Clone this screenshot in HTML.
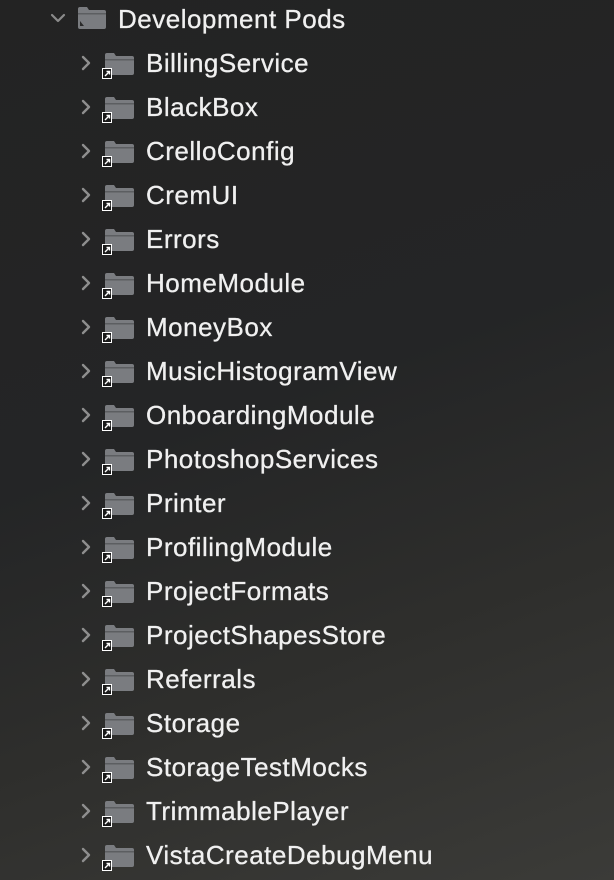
<!DOCTYPE html>
<html><head><style>
html,body{margin:0;padding:0}
body{width:614px;height:880px;overflow:hidden;position:relative;font-family:"Liberation Sans",sans-serif;
background:linear-gradient(160deg,#232323 0%,#242526 45%,#2e2e2c 70%,#3b3b38 100%);}
.r{position:absolute;height:44px;left:0;width:614px}
.t{position:absolute;top:0;line-height:44px;font-size:26px;color:#f0f0f0;letter-spacing:0.5px;-webkit-text-stroke:0.3px #f0f0f0}
svg{position:absolute}
</style></head><body>
<div class="r" style="top:-3px">
<svg style="left:50px;top:15px" width="16" height="12" viewBox="0 0 16 12"><path d="M2 3 L8 9 L14 3" stroke="#8a8a8a" stroke-width="2.2" fill="none" stroke-linecap="round" stroke-linejoin="round"/></svg>
<svg style="left:76px;top:8px" width="32" height="26" viewBox="0 0 32 26"><path d="M2 4 Q2 2 4 2 H11 L13 5 H28 Q30 5 30 7 V22 Q30 24 28 24 H4 Q2 24 2 22 Z" fill="#7a7c80"/><rect x="2" y="8" width="28" height="1.5" fill="#5c5e61"/><path d="M4 16 L8 21 H4 Z" fill="#2a2a2a"/></svg>
<div class="t" style="left:118px">Development Pods</div>
</div>
<div id="rows"></div>
<script>
var n=["BillingService","BlackBox","CrelloConfig","CremUI","Errors","HomeModule","MoneyBox","MusicHistogramView","OnboardingModule","PhotoshopServices","Printer","ProfilingModule","ProjectFormats","ProjectShapesStore","Referrals","Storage","StorageTestMocks","TrimmablePlayer","VistaCreateDebugMenu"];
var h="";
n.forEach(function(s,i){var top=41+i*44;
h+='<div class="r" style="top:'+top+'px">'+
'<svg style="left:80px;top:14px" width="12" height="16" viewBox="0 0 12 16"><path d="M3 2 L9 8 L3 14" stroke="#8e8e8e" stroke-width="2.4" fill="none" stroke-linecap="round" stroke-linejoin="round"/></svg>'+
'<svg style="left:102px;top:10px" width="34" height="30" viewBox="0 0 34 30"><path d="M3 4 Q3 2 5 2 H12 L14 5 H30 Q32 5 32 7 V22 Q32 24 30 24 H5 Q3 24 3 22 Z" fill="#7a7c80"/><rect x="3" y="8" width="29" height="1.5" fill="#5c5e61"/>'+
'<rect x="0" y="17" width="10" height="11" fill="#fff"/><rect x="1" y="18" width="8" height="9" fill="#1a1a1a"/><path d="M3 25 L7 21 M4.5 20.5 H7.5 V23.5" stroke="#fff" stroke-width="1.4" fill="none"/></svg>'+
'<div class="t" style="left:146px">'+s+'</div></div>';});
document.getElementById("rows").innerHTML=h;
</script>
</body></html>
